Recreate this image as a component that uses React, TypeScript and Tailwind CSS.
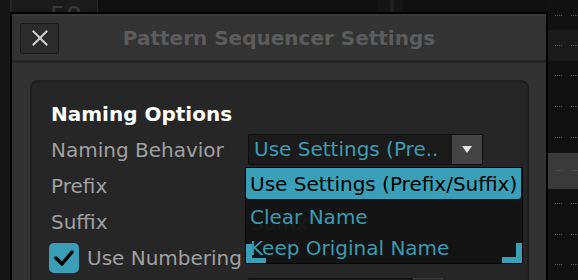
import React from "react";

const font = { fontFamily: '"DejaVu Sans", "Liberation Sans", sans-serif' };

// rows of the track list that peeks out on the right of the dialog
const trackRows = [
  "h-[33px] bg-[#111111]",
  "h-[33px] bg-[#1a1a1a]",
  "h-[33px] bg-[#111111]",
  "h-[33px] bg-[#111111]",
  "h-[34px] bg-[#111111]",
  "h-[39px] bg-[#3a3a3a]",
  "h-[33px] bg-[#111111]",
  "h-[33px] bg-[#111111]",
  "h-[33px] bg-[#111111]",
];

function Background() {
  return (
    <div className="flex h-full w-full">
      <div className="w-[10px] bg-[#161616]" />
      <div className="w-[2px] bg-[#262626]" />
      <div className="w-[85px] bg-[#1b1b1b] pl-[38px] pt-[2px]">
        <span className="text-[25px] leading-none text-[#3a3a3a]">50</span>
      </div>
      <div className="w-px bg-[#2a2a2a]" />
      <div className="flex flex-1 bg-[#101010]">
        <div className="w-[280px]" />
        <div className="w-[12px] bg-[#151515]" />
        <div className="w-[4px] bg-[#202020]" />
        <div className="w-[9px] bg-[#151515]" />
        <div className="flex-1" />
      </div>
      <div className="flex w-[30px] flex-col">
        {trackRows.map((cls, i) => (
          <div key={i} className={`flex items-center gap-[9px] pl-[7px] ${cls}`}>
            <div className="w-[9px] border-t border-dotted border-[#555555]" />
            <div className="w-[9px] border-t border-dotted border-[#555555]" />
          </div>
        ))}
      </div>
    </div>
  );
}

function Dropdown() {
  return (
    <div className="relative mt-[2px] flex h-[31px] w-[235px] items-stretch rounded-[2px] border border-[#0e0e0e] bg-[#1a1a1a]">
      <div className="flex-1 pl-[5px] leading-[29px] text-[#3a9db4]">Use Settings (Pre..</div>
      <div className="flex w-[30px] items-center justify-center bg-[#444444]">
        <svg width="10" height="7" viewBox="0 0 10 7">
          <polygon points="0,0 10,0 5,7" fill="#e6e6e6" />
        </svg>
      </div>

      {/* open list */}
      <div className="absolute left-[-4px] top-[32px] z-10 h-[97px] w-[278px] border border-[#050505] bg-[#141414] pr-px">
        <div className="absolute bottom-0 left-0 h-[19px] w-[20px] border-b-[5px] border-l-[6px] border-[#3aa0b8]" />
        <div className="absolute bottom-0 right-0 h-[20px] w-[20px] border-b-[6px] border-r-[6px] border-[#3aa0b8]" />
        {/* suffix placeholder showing faintly through the list */}
        <div className="absolute left-[5px] top-[43px] leading-6 text-[#1a1a1a]">Suffix</div>
        <div className="relative h-[31px] rounded-b-[3px] bg-[#3aa0b8] pl-[4px] pt-[2px] leading-[28px] text-black">
          Use Settings (Prefix/Suffix)
        </div>
        <div className="relative mt-[6px] pl-[4px] leading-6 text-[#3a9bb1]">Clear Name</div>
        <div className="relative mt-[7px] pl-[4px] leading-6 text-[#3a9bb1]">Keep Original Name</div>
      </div>
    </div>
  );
}

export default function App() {
  return (
    <div className="relative h-[280px] w-[578px] overflow-hidden bg-[#111111] text-[20px]" style={font}>
      <Background />

      {/* Settings dialog */}
      <div className="absolute left-[10px] top-[12px] flex h-[290px] w-[538px] flex-col border-2 border-black bg-[#323232]">
        <div className="grid h-[46px] grid-cols-[1fr_auto_1fr] items-center border-t-2 border-[#393939] bg-[#333333] px-[8px]">
          <div>
            <button className="flex h-[31px] w-[39px] items-center justify-center rounded-[2px] border border-[#1a1a1a] bg-[#2b2b2b]">
              <svg width="16" height="16" viewBox="0 0 16 16" stroke="#d2d2d2" strokeWidth="2" strokeLinecap="square">
                <line x1="1.5" y1="1.5" x2="14.5" y2="14.5" />
                <line x1="14.5" y1="1.5" x2="1.5" y2="14.5" />
              </svg>
            </button>
          </div>
          <div className="font-bold leading-6 text-[#5c5c5c]">Pattern Sequencer Settings</div>
          <div />
        </div>
        <div className="h-[3px] bg-[#262626]" />

        <div className="flex flex-1 flex-col pl-[18px] pr-[17px] pt-[17px]">
          <div className="flex-1 rounded-[8px] border-2 border-[#1e1e1e] bg-[#262626] pl-[19px] pt-[14px]">
            <div className="flex h-[36px] items-center font-bold leading-6 text-white">Naming Options</div>

            <div className="grid h-[36px] grid-cols-[197px_235px] items-start">
              <div className="flex h-[36px] items-center leading-6 text-[#a0a0a0]">Naming Behavior</div>
              <Dropdown />
            </div>
            <div className="flex h-[36px] items-center leading-6 text-[#a0a0a0]">Prefix</div>
            <div className="flex h-[36px] items-center leading-6 text-[#a0a0a0]">Suffix</div>

            <div className="flex h-[36px] items-center">
              <div className="ml-[-2px] flex h-[30px] w-[30px] items-center justify-center rounded-[5px] bg-[#3a9fb6]">
                <svg width="30" height="30" viewBox="0 0 30 30" fill="none" stroke="#000" strokeWidth="3.5" strokeLinecap="round" strokeLinejoin="round">
                  <polyline points="7,15 13,21 23,9" />
                </svg>
              </div>
              <span className="ml-[8px] leading-6 text-[#a0a0a0]">Use Numbering</span>
            </div>

            <div className="mt-[2px] grid grid-cols-[197px_165px_30px]">
              <div />
              <div className="h-[20px] border border-[#151515] bg-[#1a1a1a]" />
              <div className="h-[20px] border border-[#3a3a3a] bg-[#2c2c2c]" />
            </div>
          </div>
        </div>
      </div>
    </div>
  );
}
